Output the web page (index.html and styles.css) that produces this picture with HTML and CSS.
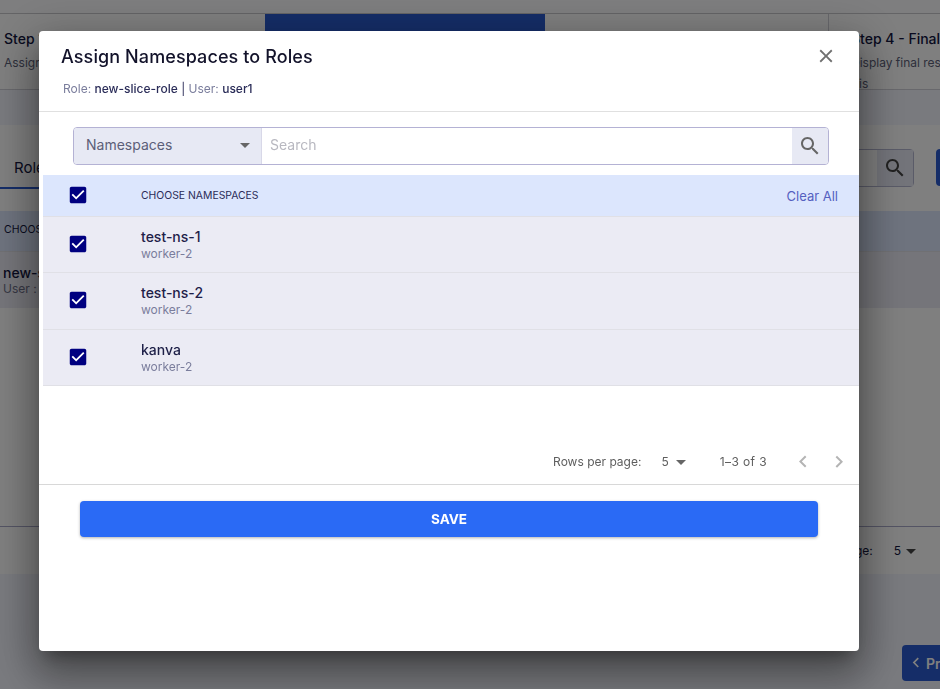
FILE: index.html
```html
<!DOCTYPE html>
<html lang="en">
<head>
    <meta charset="UTF-8">
    <meta name="viewport" content="width=device-width, initial-scale=1.0">
    <title>Assign Namespaces to Roles</title>
    <link rel="stylesheet" href="styles.css">
</head>
<body>

    <svg class="icon-defs" width="0" height="0">
        <symbol id="i-search" viewBox="0 0 24 24"><path d="M15.5 14h-.79l-.28-.27C15.41 12.59 16 11.11 16 9.5 16 5.91 13.09 3 9.5 3S3 5.91 3 9.5 5.91 16 9.5 16c1.61 0 3.09-.59 4.23-1.57l.27.28v.79l5 4.99L20.49 19l-4.99-5zm-6 0C7.01 14 5 11.99 5 9.5S7.01 5 9.5 5 14 7.01 14 9.5 11.99 14 9.5 14z"/></symbol>
        <symbol id="i-check" viewBox="0 0 24 24"><rect x="5" y="5" width="14" height="14" fill="#fff"/><path d="M19 3H5c-1.11 0-2 .9-2 2v14c0 1.1.89 2 2 2h14c1.11 0 2-.9 2-2V5c0-1.1-.89-2-2-2zm-9 14l-5-5 1.41-1.41L10 14.17l7.59-7.59L19 8l-9 9z"/></symbol>
        <symbol id="i-drop" viewBox="0 0 24 24"><path d="M7 10l5 5 5-5z"/></symbol>
        <symbol id="i-left" viewBox="0 0 24 24"><path d="M15.41 16.09l-4.58-4.59 4.58-4.59L14 5.5l-6 6 6 6z"/></symbol>
        <symbol id="i-right" viewBox="0 0 24 24"><path d="M8.59 16.34l4.58-4.59-4.58-4.59L10 5.75l6 6-6 6z"/></symbol>
    </svg>

    <!-- page behind the dialog -->
    <div class="page">
        <div class="topbar"></div>
        <div class="stepper">
            <div class="step step-one">
                <h4>Step 1 - Select</h4>
                <p>Assign roles</p>
            </div>
            <div class="step step-active"></div>
            <div class="step"></div>
            <div class="step step-four">
                <h4>Step 4 - Finalize</h4>
                <p>Display final results</p>
                <p class="step-note">is</p>
            </div>
        </div>
        <div class="gap"></div>
        <div class="panel">
            <div class="panel-tools">
                <span class="tab">Roles</span>
                <div class="bg-search">
                    <div class="bg-search-btn">
                        <svg width="24" height="24"><use href="#i-search"/></svg>
                    </div>
                </div>
                <div class="bg-add"></div>
            </div>
            <div class="bg-head">CHOOSE</div>
            <div class="bg-row">
                <strong>new-slice-role</strong>
                <span>User : user1</span>
            </div>
            <div class="bg-foot">
                <span>Rows per page:</span>
                <span class="bg-five">5</span>
                <svg class="bg-drop" width="24" height="24"><use href="#i-drop"/></svg>
            </div>
        </div>
        <div class="page-actions">
            <button class="prev">
                <svg width="20" height="20"><use href="#i-left"/></svg>
                <span>Previous</span>
            </button>
        </div>
    </div>

    <div class="overlay">
        <div class="modal">
            <div class="modal-head">
                <h2>Assign Namespaces to Roles</h2>
                <svg class="close" width="22" height="22" viewBox="0 0 24 24"><path d="M19 6.41L17.59 5 12 10.59 6.41 5 5 6.41 10.59 12 5 17.59 6.41 19 12 13.41 17.59 19 19 17.59 13.41 12z"/></svg>
                <p class="sub">Role: <b>new-slice-role</b> <i>|</i> User: <b>user1</b></p>
            </div>

            <div class="search-wrap">
                <div class="search">
                    <div class="search-select">
                        <span>Namespaces</span>
                        <svg width="24" height="24"><use href="#i-drop"/></svg>
                    </div>
                    <div class="search-input">Search</div>
                    <div class="search-btn">
                        <svg width="24" height="24"><use href="#i-search"/></svg>
                    </div>
                </div>
            </div>

            <div class="table">
                <div class="tr tr-head">
                    <svg class="check" width="22" height="22"><use href="#i-check"/></svg>
                    <span class="th">CHOOSE NAMESPACES</span>
                    <span class="clear">Clear All</span>
                </div>
                <div class="tr">
                    <svg class="check" width="22" height="22"><use href="#i-check"/></svg>
                    <div class="cell">
                        <div class="ns">test-ns-1</div>
                        <div class="worker">worker-2</div>
                    </div>
                </div>
                <div class="tr">
                    <svg class="check" width="22" height="22"><use href="#i-check"/></svg>
                    <div class="cell">
                        <div class="ns">test-ns-2</div>
                        <div class="worker">worker-2</div>
                    </div>
                </div>
                <div class="tr">
                    <svg class="check" width="22" height="22"><use href="#i-check"/></svg>
                    <div class="cell">
                        <div class="ns">kanva</div>
                        <div class="worker">worker-2</div>
                    </div>
                </div>
            </div>

            <div class="pager">
                <span>Rows per page:</span>
                <span class="pager-five">5</span>
                <svg class="pager-drop" width="24" height="24"><use href="#i-drop"/></svg>
                <span class="pager-count">1–3 of 3</span>
                <svg class="pager-arrow" width="24" height="24"><use href="#i-left"/></svg>
                <svg class="pager-arrow next" width="24" height="24"><use href="#i-right"/></svg>
            </div>

            <div class="modal-foot">
                <button class="save">SAVE</button>
            </div>
        </div>
    </div>

</body>
</html>
```

FILE: styles.css
```css
* {
    box-sizing: border-box;
}

html, body {
    margin: 0;
    height: 100%;
    overflow: hidden;
}

body {
    font-family: Inter, "Liberation Sans", sans-serif;
    background-color: #f2f4fc;
    color: #12153e;
}

.icon-defs {
    position: absolute;
}

/* page behind */
.page {
    height: 689px;
    width: 940px;
    overflow: hidden;
}

.topbar {
    height: 14px;
    background: #fcfcff;
    border-bottom: 1px solid #c8c8cc;
}

.stepper {
    display: grid;
    grid-template-columns: 265px 280px 283px 112px;
    height: 76px;
    background: #fff;
    border-bottom: 1px solid #d0d0d8;
}

.step {
    padding: 16px 0 0 4px;
    white-space: nowrap;
    overflow: hidden;
}

.step h4 {
    margin: 0;
    font-size: 14px;
    font-weight: 500;
    line-height: 17px;
}

.step p {
    margin: 5px 0 0;
    font-size: 12px;
    line-height: 21px;
    color: #5c5f78;
}

.step p.step-note {
    margin: 0 0 0 8px;
}

.step-active {
    background: linear-gradient(#2a5bd0 0 17px, #fff 17px);
}

.step-four {
    border-left: 1px solid #d0d0d8;
    padding-left: 22px;
}

.gap {
    height: 35px;
}

.panel {
    height: 449px;
    background: #fff;
    display: flex;
    flex-direction: column;
}

.panel-tools {
    height: 86px;
    padding-top: 24px;
    display: flex;
    align-items: flex-start;
}

.tab {
    font-size: 15px;
    line-height: 38px;
    height: 40px;
    width: 60px;
    padding-left: 14px;
    overflow: hidden;
    border-bottom: 2px solid #2a5bd0;
}

.bg-search {
    margin-left: auto;
    width: 200px;
    height: 38px;
    border: 1px solid #b4b6d0;
    border-radius: 4px;
    display: flex;
    justify-content: flex-end;
}

.bg-search-btn {
    width: 36px;
    background: #e6e8f4;
    display: flex;
    align-items: center;
    justify-content: center;
    fill: #444;
}

.bg-add {
    margin: 0 -16px 0 22px;
    width: 20px;
    height: 37px;
    background: #2a5bd0;
    border-radius: 4px;
}

.bg-head {
    height: 41px;
    background: #dce6fd;
    border-bottom: 1px solid #e0e0e6;
    padding-left: 4px;
    font-size: 10.5px;
    line-height: 38px;
}

.bg-row {
    height: 56px;
    background: #ebebf4;
    padding: 12px 0 0 3px;
    display: flex;
    flex-direction: column;
    font-size: 14px;
    line-height: 17px;
}

.bg-row strong {
    font-weight: 500;
}

.bg-row span {
    font-size: 12px;
    line-height: 15px;
    color: #6e7088;
}

.bg-foot {
    margin-top: 218px;
    height: 48px;
    border-top: 1px solid #a8a8c8;
    display: flex;
    align-items: center;
    justify-content: flex-end;
    padding-right: 17px;
    font-size: 12px;
}

.bg-five {
    margin-left: 21px;
}

.bg-drop {
    margin-left: -2px;
    fill: #444;
}

.page-actions {
    display: flex;
    justify-content: flex-end;
    padding-top: 71px;
}

.prev {
    width: 38px;
    height: 36px;
    padding: 0 0 0 4px;
    border: 0;
    border-radius: 4px 0 0 4px;
    background: #2a5bd0;
    color: #fff;
    font: 600 14px Inter, sans-serif;
    display: flex;
    align-items: center;
    white-space: nowrap;
    overflow: hidden;
    fill: #fff;
}

.prev svg {
    flex: none;
}

/* dialog */
.overlay {
    position: fixed;
    inset: 0;
    background: rgba(0, 0, 0, 0.5);
    padding: 31px 0 0 39px;
}

.modal {
    width: 820px;
    height: 620px;
    background: #fff;
    border-radius: 4px;
    box-shadow: 0 11px 15px -7px rgba(0, 0, 0, 0.3), 0 24px 38px 3px rgba(0, 0, 0, 0.28), 0 9px 46px 8px rgba(0, 0, 0, 0.2);
    display: flex;
    flex-direction: column;
}

.modal-head {
    height: 81px;
    padding: 15px 0 0 22px;
    border-bottom: 1px solid #e0e0e0;
    position: relative;
}

.modal-head h2 {
    margin: 0;
    font-size: 18px;
    font-weight: 500;
    line-height: 21px;
    letter-spacing: 0.1px;
    color: #12122a;
}

.close {
    position: absolute;
    top: 14px;
    right: 22px;
    fill: #707070;
}

.sub {
    margin: 14px 0 0 2px;
    font-size: 12px;
    line-height: 15px;
    color: #7a7d9c;
}

.sub b {
    font-weight: 500;
    color: #2a2c58;
}

.sub i {
    font-style: normal;
    color: #2a2c58;
}

.search-wrap {
    padding: 15px 30px 10px 34px;
}

.search {
    display: flex;
    height: 38px;
    border: 1px solid #b4b2d4;
    border-radius: 4px;
    overflow: hidden;
}

.search-select {
    width: 188px;
    background: #e7e9f4;
    border-right: 1px solid #d8d8e8;
    display: flex;
    align-items: center;
    justify-content: space-between;
    padding: 0 4px 2px 12px;
    font-size: 14px;
    color: #5c5f78;
    fill: #666;
}

.search-select span {
    margin-bottom: 2px;
}

.search-input {
    flex: 1;
    padding-left: 8px;
    font-size: 14px;
    line-height: 34px;
    color: #b8b8c0;
}

.search-btn {
    width: 36px;
    background: #e7e9f4;
    display: flex;
    align-items: center;
    justify-content: center;
    fill: #666;
}

.table {
    margin-left: 4px;
    height: 211px;
}

.tr {
    height: 56.3px;
    background: #ebebf4;
    border-bottom: 1px solid #e0e0e6;
    display: flex;
    align-items: center;
    padding-left: 24px;
}

.tr-head {
    height: 42px;
    background: #dce6fd;
}

.check {
    fill: #000080;
    flex: none;
    margin-bottom: 1px;
}

.th {
    margin-left: 52px;
    font-size: 10.4px;
    font-weight: 400;
    color: #2a2c58;
}

.clear {
    margin-left: auto;
    margin-right: 21px;
    font-size: 13px;
    color: #5560c0;
}

.cell {
    margin-left: 52px;
}

.ns {
    font-size: 14px;
    font-weight: 500;
    line-height: 17px;
    color: #1e2048;
}

.worker {
    margin-top: 1px;
    font-size: 12px;
    line-height: 15px;
    color: #7a7d9c;
}

.pager {
    height: 46px;
    margin-top: 53px;
    border-bottom: 1px solid #d8d8d8;
    display: flex;
    align-items: center;
    justify-content: flex-end;
    padding: 0 8px 0 0;
    font-size: 12px;
    color: #5e5e5e;
}

.pager-five {
    margin-left: 20px;
}

.pager-drop {
    fill: #666;
}

.pager-count {
    margin: 0 24px 0 27px;
    letter-spacing: 0.4px;
}

.pager-arrow {
    fill: #b4b4b4;
}

.pager-arrow.next {
    margin-left: 12px;
}

.modal-foot {
    padding: 16px 41px 0;
}

.save {
    display: block;
    width: 100%;
    height: 36px;
    border: 0;
    border-radius: 4px;
    background: #2a6af5;
    color: #fff;
    font: 700 13.5px Inter, sans-serif;
    box-shadow: 0 1px 3px rgba(0, 0, 0, 0.3);
}
```
